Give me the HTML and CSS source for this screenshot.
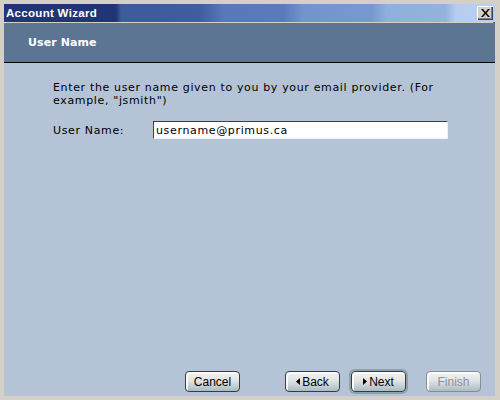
FILE: index.html
```html
<!DOCTYPE html>
<html lang="en">
<head>
  <meta charset="UTF-8" />
  <title>Account Wizard</title>
  <link rel="stylesheet" href="styles.css">
</head>
<body>

  <div class="window">
    <div class="titlebar">
      <span class="title">Account Wizard</span>
      <button class="close-btn" type="button">
        <svg width="9" height="8" viewBox="0 0 9 8">
          <path d="M0 0h2l2.5 3 2.5-3h2L5.5 4 9 8H7L4.5 5 2 8H0l3.5-4z" fill="#000"/>
        </svg>
      </button>
    </div>

    <div class="page-header">User Name</div>

    <div class="page-body">
      <p class="intro">Enter the user name given to you by your email provider. (For example, "jsmith")</p>

      <div class="field-row">
        <label for="userName">User Name:</label>
        <input type="text" id="userName" class="text-field" value="username@primus.ca">
      </div>

      <div class="button-bar">
        <button type="button" class="wiz-btn btn-cancel">Cancel</button>
        <button type="button" class="wiz-btn btn-back">
          <svg class="arrow" width="4" height="7" viewBox="0 0 4 7"><path d="M4 0v7L0 3.5z" fill="#000"/></svg>Back
        </button>
        <button type="button" class="wiz-btn btn-next is-default">
          <svg class="arrow" width="4" height="7" viewBox="0 0 4 7"><path d="M0 0v7l4-3.5z" fill="#000"/></svg>Next
        </button>
        <button type="button" class="wiz-btn btn-finish" disabled>Finish</button>
      </div>
    </div>
  </div>

</body>
</html>
```

FILE: styles.css
```css
* {
  box-sizing: border-box;
}

html, body {
  margin: 0;
  padding: 0;
  width: 500px;
  height: 400px;
  overflow: hidden;
}

body {
  font-family: 'DejaVu Sans', Verdana, sans-serif;
  font-size: 11px;
  letter-spacing: 0.65px;
  color: #000;
  background: #d4d0c8;
}

.window {
  width: 500px;
  height: 400px;
  display: flex;
  flex-direction: column;
  background: #d4d0c8;
  border-top: 4px solid #d4d0c8;
  border-left: 4px solid #d4d0c8;
  border-right: 5px solid #d4d0c8;
  border-bottom: 4px solid #d4d0c8;
  box-shadow: inset 1px 1px 0 #d4d0c8, inset 2px 2px 0 #ffffff,
              inset -1px -1px 0 #404040, inset -2px -2px 0 #808080;
}

.titlebar {
  height: 18px;
  display: flex;
  align-items: center;
  justify-content: space-between;
  padding: 0 2px;
  background: linear-gradient(to right,
    #203476 0%, #203476 22.8%,
    #3d5a9b 23.8%, #3f5d9f 40%,
    #5a79bb 45%, #5b7abc 57%,
    #7394cc 61%, #7799cf 75%,
    #8fb0dc 78%, #93b3de 90%,
    #b7cdef 92%, #b9cff0 100%);
}

.title {
  color: #fff;
  font-family: 'Liberation Sans', Arial, sans-serif;
  font-weight: bold;
  font-size: 11.5px;
  letter-spacing: 0.3px;
}

.close-btn {
  width: 16px;
  height: 14px;
  padding: 0;
  margin: 0;
  display: flex;
  align-items: center;
  justify-content: center;
  background: #d4d0c8;
  border: none;
  box-shadow: inset 1px 1px 0 #ffffff, inset -1px -1px 0 #404040, inset -2px -2px 0 #808080;
}

.page-header {
  height: 40px;
  margin-top: 1px;
  padding-left: 24px;
  display: flex;
  align-items: center;
  background: #5b7593;
  border-bottom: 1px solid #000;
  color: #fff;
  font-weight: bold;
  font-size: 11px;
  letter-spacing: 0.1px;
}

.page-body {
  flex: 1;
  display: flex;
  flex-direction: column;
  background: #b4c3d6;
  padding: 18px 14px 4px 49px;
}

.intro {
  margin: 0;
  width: 385px;
  line-height: 13px;
}

.field-row {
  display: flex;
  align-items: center;
  margin-top: 14px;
}

.field-row label {
  width: 100px;
}

.text-field {
  width: 295px;
  height: 18px;
  padding: 0 2px;
  font-family: inherit;
  font-size: 11px;
  letter-spacing: 0.65px;
  color: #000;
  background: #fff;
  border: 1px solid;
  border-color: #404040 #eef2f6 #eef2f6 #404040;
  outline: none;
}

.button-bar {
  margin-top: auto;
  display: flex;
  align-items: center;
  padding-left: 132px;
}

.wiz-btn {
  height: 21px;
  width: 56px;
  padding: 0;
  font-family: 'Liberation Sans', Arial, sans-serif;
  font-size: 12px;
  letter-spacing: 0;
  color: #000;
  border: 1px solid #3c3c3c;
  border-radius: 4px;
  background: linear-gradient(to bottom, #f2f2f0 0%, #e2e4e4 45%, #a9bcc4 100%);
  box-shadow: inset 2px 2px 0 #fafafa;
  display: flex;
  align-items: center;
  justify-content: center;
}

.arrow {
  margin-right: 2px;
}

.btn-back {
  margin-left: 45px;
}

.btn-next {
  margin-left: 11px;
}

.is-default {
  outline: 2px solid #8da2a8;
  outline-offset: 0;
}

.btn-finish {
  margin-left: 20px;
  color: #8c949c;
  border-color: #8a8e92;
}
```
